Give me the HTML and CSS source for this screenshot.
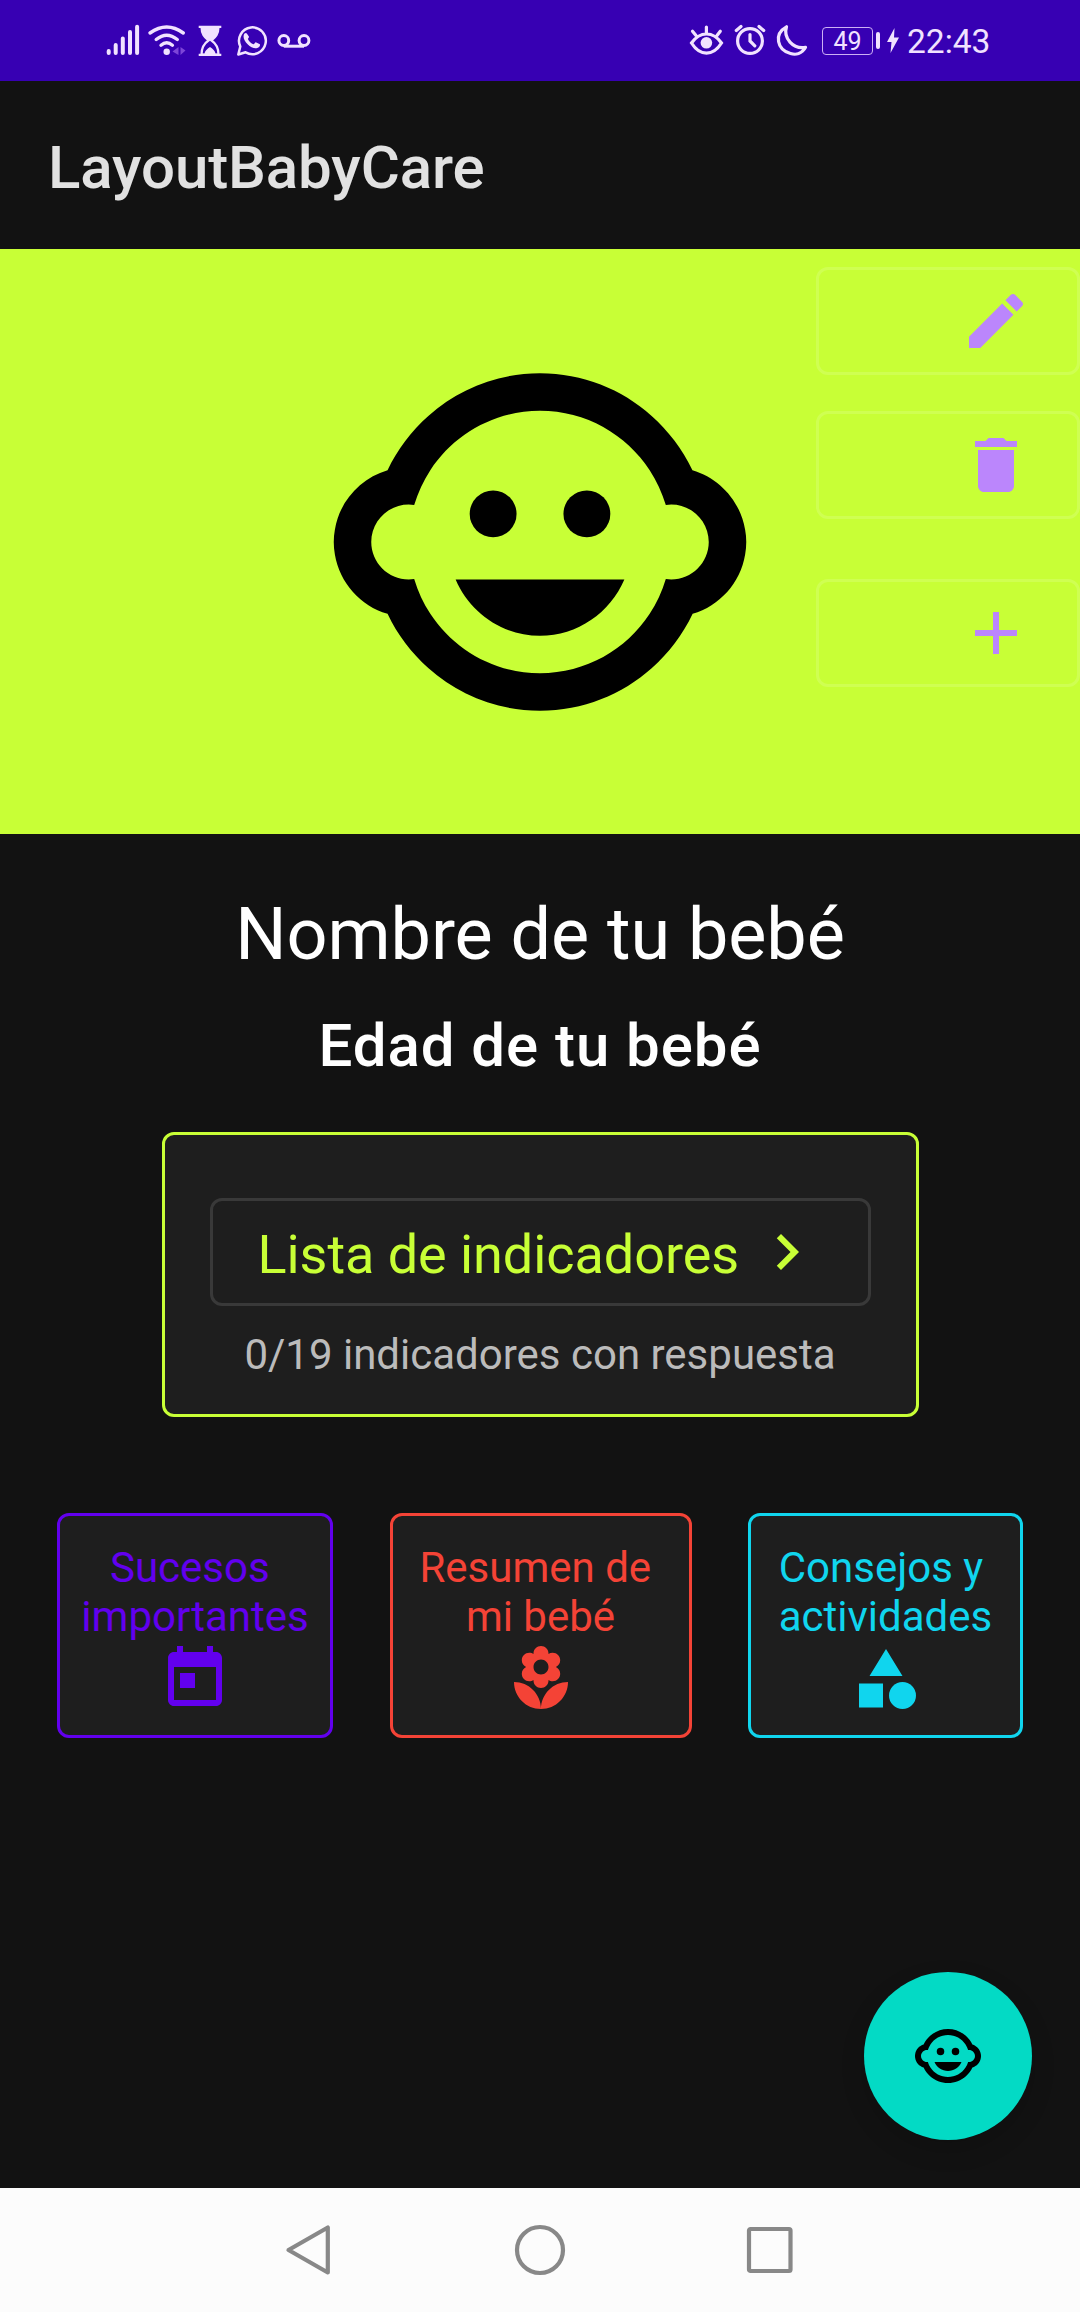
FILE: index.html
```html
<!DOCTYPE html>
<html lang="es">
<head>
<meta charset="utf-8">
<title>LayoutBabyCare</title>
<link rel="stylesheet" href="styles.css">
</head>
<body>
<svg class="defs" aria-hidden="true">
  <symbol id="child" viewBox="0 0 24 24">
    <circle cx="14.5" cy="10.5" r="1.25"/><circle cx="9.5" cy="10.5" r="1.25"/>
    <path d="M22.94 12.66c.04-.21.06-.43.06-.66s-.02-.45-.06-.66c-.25-1.51-1.36-2.74-2.81-3.17-.53-1.12-1.28-2.1-2.19-2.91C16.36 3.85 14.28 3 12 3s-4.36.85-5.94 2.26c-.92.81-1.67 1.8-2.19 2.91-1.45.43-2.56 1.65-2.81 3.17-.04.21-.06.43-.06.66s.02.45.06.66c.25 1.51 1.36 2.74 2.81 3.17.52 1.11 1.27 2.09 2.17 2.89C7.62 20.14 9.71 21 12 21s4.38-.86 5.97-2.28c.9-.8 1.65-1.79 2.17-2.89 1.44-.43 2.55-1.65 2.8-3.17zM19 14c-.1 0-.19-.02-.29-.03-.2.67-.49 1.29-.86 1.86C16.6 17.74 14.45 19 12 19s-4.6-1.26-5.85-3.17c-.37-.57-.66-1.19-.86-1.86-.1.01-.19.03-.29.03-1.1 0-2-.9-2-2s.9-2 2-2c.1 0 .19.02.29.03.2-.67.49-1.29.86-1.86C7.4 6.26 9.55 5 12 5s4.6 1.26 5.85 3.17c.37.57.66 1.19.86 1.86.1-.01.19-.03.29-.03 1.1 0 2 .9 2 2s-.9 2-2 2zM7.5 14c.76 1.77 2.49 3 4.5 3s3.74-1.23 4.5-3h-9z"/>
  </symbol>
</svg>
<div class="screen">
  <header class="status">
    <div class="status-left">
      <svg width="40" height="81" viewBox="104 0 40 81" stroke="currentColor" stroke-width="4" stroke-linecap="round"><path d="M108.700 51v2M115.700 45v8M122.800 38.500v14.500M130 32v21M137.100 26.700V53"/></svg>
      <svg width="46" height="81" viewBox="144 0 46 81" stroke="currentColor" stroke-width="3.400" stroke-linecap="round"><path d="M150 33Q166.700 21 183.300 33M156.200 39.500Q166.700 31 177.300 39.500M161 45.200Q166.700 40.500 172.400 45.200"/><circle cx="166.700" cy="51.700" r="3.200" fill="currentColor" stroke="none"/><path class="dim" d="M178.500 47v8l-6-3.500zM180.500 47v8l5-4.500z"/></svg>
      <svg width="38" height="81" viewBox="190 0 38 81" stroke="currentColor" stroke-width="2.200"><path d="M198.700 26.800h22.600M198.700 54.900h22.600"/><path d="M201.500 27h17c0 7-3 10-7 13.500 4.500 3 7 7 7 14h-17c0-7 2.500-11 7-14-4-3.500-7-6.500-7-13.500z"/><path d="M201.500 27h17c0 7-3 10-7 13.500h-3c-4-3.500-7-6.500-7-13.500zM204.500 54c0-3 2.500-5 5.500-7 3 2 5.500 4 5.500 7z" fill="currentColor" stroke="none"/></svg>
      <svg width="46" height="81" viewBox="228 0 46 81"><path d="M238.300 54.500l2-8a13.400 13.400 0 1 1 5.300 5.800z" stroke="currentColor" stroke-width="2.500" stroke-linejoin="round"/><path d="M247 33.700c-.6-1.200-1.800-.9-2.500-.1-4 5 5.500 15.500 12 14.700 2.500-.3 4-2.300 3.400-4l-4.100-2c-1 .2-1.300 2-2.400 2-2.200-.7-4.500-3-5.500-5.200.2-1.200 1.300-1.400 1-2.600z" fill="currentColor"/></svg>
      <svg width="38" height="81" viewBox="274 0 38 81" stroke="currentColor" stroke-width="3"><circle cx="283.800" cy="40.500" r="4.900"/><circle cx="304" cy="40.500" r="4.900"/><path d="M283.800 46.200H304" stroke-width="3"/></svg>
    </div>
    <div class="status-right">
      <svg width="40" height="81" viewBox="686 0 40 81" stroke="currentColor" stroke-width="3.200" stroke-linecap="round"><path d="M691.500 43c8.500-12 21.500-12 30 0-8.500 13.500-21.500 13.500-30 0zM706.400 32.500V27M696 35.500l-3.500-4.300M717 35.500l3.300-4.300"/><circle cx="706.400" cy="42.800" r="5.800" fill="currentColor" stroke="none"/></svg>
      <svg width="46" height="81" viewBox="726 0 46 81" stroke="currentColor" stroke-width="3.200" stroke-linecap="round"><circle cx="750" cy="41" r="12.400"/><path d="M750 34.500V41l4.800 4.800M736.300 30.500l4.700-4M763.700 30.500l-4.700-4"/></svg>
      <svg width="42" height="81" viewBox="772 0 42 81" stroke="currentColor" stroke-width="3.200" stroke-linejoin="round"><path d="M786.500 26.800C783 38 793 49.500 805.500 47.300 802 54 795.500 55 790.500 53.500 777 50 773.500 34 786.500 26.800z"/></svg>
      <span class="battery">49</span><span class="nub"></span>
      <svg class="bolt" width="12" height="25" viewBox="0 0 12 25"><path d="M7.500 0L0 14h4.500L3.500 25 12 9.500H7z" fill="currentColor"/></svg>
      <span class="clock">22:43</span>
    </div>
  </header>
  <div class="appbar"><h1>LayoutBabyCare</h1></div>
  <section class="hero">
    <svg class="face"><use href="#child"/></svg>
    <div class="actions">
      <button class="action" aria-label="Editar"><svg viewBox="0 0 24 24"><path d="M3 17.250V21h3.750L17.810 9.940l-3.750-3.750L3 17.250zM20.710 7.040c.39-.39.39-1.020 0-1.410l-2.340-2.340c-.39-.39-1.020-.39-1.410 0l-1.830 1.830 3.750 3.750 1.830-1.830z"/></svg></button>
      <button class="action" aria-label="Eliminar"><svg viewBox="0 0 24 24"><path d="M6 19c0 1.100.9 2 2 2h8c1.100 0 2-.9 2-2V7H6v12zM19 4h-3.500l-1-1h-5l-1 1H5v2h14V4z"/></svg></button>
      <button class="action last" aria-label="Agregar"><svg viewBox="0 0 24 24"><path d="M19 13h-6v6h-2v-6H5v-2h6V5h2v6h6v2z"/></svg></button>
    </div>
  </section>
  <main>
    <h2 class="name">Nombre de tu bebé</h2>
    <h3 class="age">Edad de tu bebé</h3>
    <section class="indicators">
      <button class="list"><span>Lista de indicadores</span><svg viewBox="0 0 24 24"><path d="M10 6L8.590 7.410 13.170 12l-4.580 4.590L10 18l6-6z"/></svg></button>
      <p>0/19 indicadores con respuesta</p>
    </section>
    <nav class="cards">
      <a class="card events"><span>Sucesos&nbsp;<br>importantes</span><svg viewBox="0 0 24 24"><path d="M19 3h-1V1h-2v2H8V1H6v2H5c-1.110 0-1.990.9-1.990 2L3 19c0 1.100.89 2 2 2h14c1.100 0 2-.9 2-2V5c0-1.100-.9-2-2-2zm0 16H5V8h14v11zM7 10h5v5H7z"/></svg></a>
      <a class="card summary"><span>Resumen de&nbsp;<br>mi bebé</span><svg viewBox="0 0 24 24"><path d="M12 22c4.970 0 9-4.030 9-9-4.970 0-9 4.030-9 9zM5.600 10.250c0 1.380 1.120 2.500 2.500 2.500.53 0 1.010-.16 1.420-.44l-.02.19c0 1.380 1.120 2.500 2.500 2.500s2.500-1.120 2.500-2.500l-.02-.19c.4.28.89.44 1.420.44 1.380 0 2.500-1.120 2.500-2.500 0-1-.59-1.850-1.430-2.250.84-.4 1.430-1.250 1.430-2.250 0-1.380-1.120-2.500-2.500-2.500-.53 0-1.010.16-1.420.44l.02-.19C14.500 2.120 13.380 1 12 1S9.500 2.120 9.500 3.500l.02.19c-.4-.28-.89-.44-1.420-.44-1.380 0-2.500 1.120-2.500 2.500 0 1 .59 1.850 1.430 2.250-.84.4-1.430 1.250-1.430 2.250zM12 5.500c1.380 0 2.500 1.120 2.500 2.500s-1.120 2.500-2.500 2.500S9.500 9.380 9.500 8s1.120-2.500 2.500-2.500zM3 13c0 4.970 4.030 9 9 9 0-4.970-4.030-9-9-9z"/></svg></a>
      <a class="card tips"><span>Consejos y<br>actividades</span><svg viewBox="0 0 24 24"><path d="M12 2l-5.500 9h11zM3 13.500h8v8H3z"/><circle cx="17.500" cy="17.500" r="4.500"/></svg></a>
    </nav>
    <button class="fab" aria-label="Bebé"><svg><use href="#child"/></svg></button>
  </main>
  <footer class="navbar">
    <svg viewBox="0 0 52 52"><path d="M42.800 3.500v45L3.500 26z"/></svg>
    <svg viewBox="0 0 52 52"><circle cx="26" cy="26" r="23"/></svg>
    <svg viewBox="0 0 52 52"><rect x="6" y="5" width="41.500" height="42" rx="1.500"/></svg>
  </footer>
</div>
</body>
</html>
```
FILE: styles.css
```css
* { box-sizing: border-box; margin: 0; padding: 0; }
body { background: #121212; font-family: Roboto, sans-serif; }
button { background: none; border: 0; font: inherit; color: inherit; }
svg { display: block; flex: none; fill: currentColor; }
.defs { display: none; }
.screen { display: flex; flex-direction: column; width: 1080px; height: 2312px; overflow: hidden; }

.status { display: flex; justify-content: space-between; height: 81px; padding: 0 89px 0 104px; background: #3700b3; color: #f1e2ff; }
.status svg { fill: none; }
.status-left, .status-right { display: flex; align-items: center; }
.status .dim { fill: #7d45d8; stroke: none; }
.battery { width: 51px; height: 28px; margin-left: 8px; border: 1.5px solid #cdb0f5; border-radius: 4px; font-size: 25px; line-height: 27px; text-align: center; }
.nub { width: 4px; height: 17px; margin-left: 3px; border-radius: 2px; background: currentColor; }
.bolt { margin-left: 7px; }
.clock { width: 84px; margin-left: 8px; font-size: 33.5px; line-height: 40px; padding-top: 2px; }

.appbar { display: flex; align-items: center; height: 168px; padding: 5px 48px 0; color: #e1e1e1; }
.appbar h1 { font-size: 60px; font-weight: 500; line-height: 80px; letter-spacing: -.1px; }

.hero { display: grid; grid-template-columns: 264px 1fr 264px; height: 585px; background: #c8ff36; }
.face { grid-column: 2; place-self: center; width: 450px; height: 450px; color: #000; }
.actions { display: flex; flex-direction: column; gap: 36px; padding-top: 18px; color: #bb86fc; }
.action { display: flex; align-items: center; justify-content: flex-end; height: 108px; padding-right: 45px; border: 3px solid rgba(255, 255, 255, .14); border-radius: 12px; }
.action.last { margin-top: 24px; }
.action svg, .list svg, .card svg, .fab svg { width: 72px; height: 72px; }

main { position: relative; display: flex; flex-direction: column; align-items: center; height: 1354px; padding-top: 53px; color: #fff; }
.name { font-size: 72px; font-weight: 400; line-height: 96px; letter-spacing: -.06px; }
.age { margin-top: 23px; font-size: 60px; font-weight: 500; line-height: 80px; letter-spacing: .94px; }
.indicators { width: 757px; height: 285px; margin-top: 46px; padding: 63px 45px 0; border: 3px solid #c8ff36; border-radius: 12px; background: #1e1e1e; text-align: center; }
.list { display: flex; align-items: center; justify-content: space-between; width: 100%; height: 108px; padding: 0 45px; border: 3px solid #393939; border-radius: 12px; color: #c8ff36; font-size: 54px; line-height: 64px; letter-spacing: -.06px; }
.list span { padding-top: 5px; }
.indicators p { margin-top: 24px; color: #bbb; font-size: 42px; line-height: 50px; letter-spacing: 0; }

.cards { display: flex; justify-content: space-between; width: 966px; margin-top: 96px; }
.card { display: flex; flex-direction: column; align-items: center; gap: 2px; width: 276px; height: 225px; padding-top: 27px; border: 3px solid currentColor; border-radius: 12px; background: #1e1e1e; font-size: 42px; line-height: 49px; text-align: center; }
.events { color: #6200ee; }
.summary { width: 302px; color: #f44336; }
.tips { width: 275px; color: #10d5ee; text-align: left; }

.fab { position: absolute; right: 48px; bottom: 48px; display: flex; align-items: center; justify-content: center; width: 168px; height: 168px; border-radius: 50%; background: #03dac5; color: #000; box-shadow: 0 10px 24px rgba(0, 0, 0, .16); }

.navbar { display: flex; align-items: center; justify-content: center; gap: 177px; height: 124px; background: #fcfcfc; color: #888; }
.navbar svg { width: 52px; height: 52px; fill: none; stroke: currentColor; stroke-width: 4.2; stroke-linejoin: round; }
```
